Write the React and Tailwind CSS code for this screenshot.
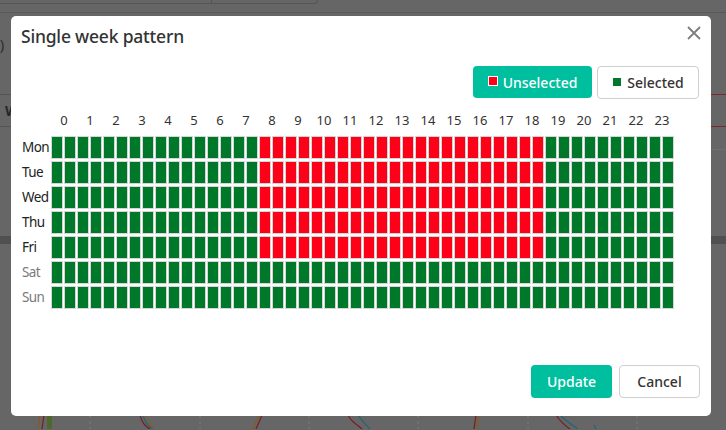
const DAYS = ["Mon", "Tue", "Wed", "Thu", "Fri", "Sat", "Sun"];
const HOURS = Array.from({ length: 24 }, (_, i) => i);
const SLOTS = Array.from({ length: 48 }, (_, i) => i);

// mon-fri 08:00 - 19:00 are unselected
const isUnselected = (day, slot) => day < 5 && slot >= 16 && slot < 38;

function SplitLine({ left, right }) {
  return (
    <div className="flex h-px">
      <div className={`w-[11px] ${left}`} />
      <div className="flex-1" />
      <div className={`w-[15px] ${right}`} />
    </div>
  );
}

function Backdrop() {
  return (
    <div className="flex h-full flex-col">
      <div className="h-[13px] border-b border-[#595959]">
        <div className="flex h-[4px] w-[318px] rounded-br-[4px] border-r border-b border-[#555]">
          <div className="w-[212px] border-r border-[#555]" />
        </div>
      </div>
      <div className="h-[81px] pt-[21px]">
        <div className="w-[11px] overflow-hidden">
          <span className="-ml-[22px] block text-[15px] leading-[20px] text-[#2e2e2e]">(kg)</span>
        </div>
      </div>
      <SplitLine left="bg-[#555]" right="bg-[#7a2a2a]" />
      <div className="h-[31px] pt-[7px]">
        <div className="w-[11px] overflow-hidden">
          <span className="block pl-[5px] text-[14px] font-bold leading-[18px] text-[#262626]">Wk</span>
        </div>
      </div>
      <SplitLine left="bg-[#555]" right="bg-[#7a2a2a]" />
      <div className="h-[22px]" />
      <SplitLine left="bg-[#666]" right="bg-[#6f6f6f]" />
      <div className="h-[86px]" />
      <div className="h-[8px] bg-[#505050]" />
      <div className="h-[171px]" />
      <svg width="726" height="14" viewBox="0 0 726 14" className="block">
        {[90, 200, 309, 418, 528, 637].map(x => (
          <line key={x} x1={x} y1="0" x2={x} y2="14" stroke="#7a7a7a" strokeDasharray="3 3" />
        ))}
        <rect x="47" y="0" width="5" height="14" fill="#4d6a2c" />
        <path d="M40 0 L38 14" stroke="#8a5a20" strokeWidth="1.2" fill="none" />
        <path d="M44 0 L42 14" stroke="#7a1c24" strokeWidth="1.2" fill="none" />
        <path d="M140 0 C142 8 146 12 150 14" stroke="#7a1c24" strokeWidth="1.2" fill="none" />
        <path d="M143 0 C145 8 149 12 153 14" stroke="#1f6678" strokeWidth="1.2" fill="none" />
        <path d="M146 0 C148 8 151 12 154 14" stroke="#8a5a20" strokeWidth="1.2" fill="none" />
        <path d="M262 0 L256 14" stroke="#7a1c24" strokeWidth="1.2" fill="none" />
        <path d="M259 0 L253 14" stroke="#8a5a20" strokeWidth="1.2" fill="none" />
        <path d="M348 0 C352 8 358 10 362 14" stroke="#7a1c24" strokeWidth="1.2" fill="none" />
        <path d="M358 0 C362 6 366 10 370 14" stroke="#1f6678" strokeWidth="1.2" fill="none" />
        <path d="M476 0 L474 14" stroke="#7a1c24" strokeWidth="1.2" fill="none" />
        <path d="M479 0 L477 14" stroke="#8a5a20" strokeWidth="1.2" fill="none" />
        <path d="M556 0 C560 6 564 10 570 14" stroke="#7a1c24" strokeWidth="1.2" fill="none" />
        <path d="M560 0 C566 6 572 10 578 14" stroke="#1f6678" strokeWidth="1.2" fill="none" />
        <path d="M594 10 L596 14" stroke="#1f6678" strokeWidth="1.2" fill="none" />
      </svg>
    </div>
  );
}

function Swatch({ color }) {
  return <span className={`mb-[2px] inline-block h-[10px] w-[10px] border border-white ${color}`} />;
}

export default function App() {
  return (
    <div className="relative h-[430px] w-[726px] overflow-hidden bg-[#666] font-['Noto_Sans',sans-serif] text-[#333]">
      <Backdrop />

      <div className="absolute top-[16px] left-[11px] flex h-[400px] w-[700px] flex-col rounded-[5px] bg-white">
        <div className="flex items-start justify-between pt-[7px] pr-[10px] pl-[10px]">
          <h2 className="text-[17.5px] leading-[26px] font-medium tracking-[-0.2px] text-[#333]">
            Single week pattern
          </h2>
          <button className="mt-[3px] p-0">
            <svg width="14" height="14" viewBox="0 0 14 14">
              <path d="M1 1 L13 13 M13 1 L1 13" stroke="#7d7d7d" strokeWidth="1.8" />
            </svg>
          </button>
        </div>

        <div className="mt-[17px] flex justify-end gap-[5px] pr-[12px]">
          <button className="flex h-[32px] w-[119px] items-center justify-center gap-[5px] rounded-[4px] bg-[#00bf9f] text-[14px] font-medium text-white">
            <Swatch color="bg-[#ff0019]" />
            Unselected
          </button>
          <button className="flex h-[33px] w-[102px] items-center justify-center gap-[5px] rounded-[4px] border border-[#cfcfcf] bg-white text-[14px] font-medium text-[#333]">
            <Swatch color="bg-[#00782a]" />
            Selected
          </button>
        </div>

        <div className="mt-[13px] flex pl-[40px]">
          {HOURS.map(h => (
            <span key={h} className="w-[26px] text-center text-[13px] leading-[16px] text-[#333]">
              {h}
            </span>
          ))}
        </div>

        <div className="mt-[8px] flex flex-col gap-[2px] pl-[11px]">
          {DAYS.map((day, d) => (
            <div key={day} className="flex items-center">
              <span
                className={`w-[29px] text-[13.5px] leading-[23px] tracking-[-0.6px] ${
                  d > 4 ? "text-[#7a7a7a]" : "text-[#222]"
                }`}
              >
                {day}
              </span>
              <div className="flex gap-px">
                {SLOTS.map(s => (
                  <span
                    key={s}
                    className={`h-[23px] w-[12px] border border-[#d6d6d6] ${
                      isUnselected(d, s) ? "bg-[#ff0019]" : "bg-[#00782a]"
                    }`}
                  />
                ))}
              </div>
            </div>
          ))}
        </div>

        <div className="mt-auto flex justify-end gap-[7px] pr-[11px] pb-[18px]">
          <button className="h-[33px] w-[81px] rounded-[4px] bg-[#00bf9f] text-[14px] font-medium text-white">
            Update
          </button>
          <button className="h-[33px] w-[81px] rounded-[4px] border border-[#cfcfcf] bg-white text-[14px] font-medium text-[#333]">
            Cancel
          </button>
        </div>
      </div>
    </div>
  );
}
